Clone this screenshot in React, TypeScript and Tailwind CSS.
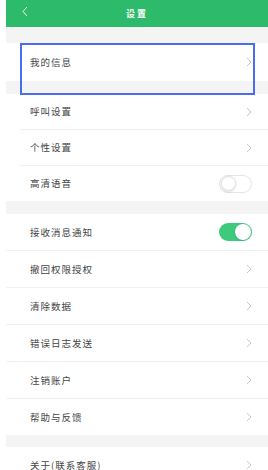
import React from 'react';

function Chevron() {
    return (
        <svg className="w-[6px] h-[10px]" viewBox="0 0 6 10" fill="none" stroke="#c8c8c8" strokeWidth={1}>
            <path d="M1 1l4 4-4 4" />
        </svg>
    );
}

function Toggle({ on }: { on: boolean }) {
    return on ? (
        <div className="w-[33px] h-[18px] rounded-full bg-[#3fc97d] flex items-center justify-end p-[1px]">
            <div className="w-[16px] h-[16px] rounded-full bg-white shadow-sm" />
        </div>
    ) : (
        <div className="w-[33px] h-[18px] rounded-full bg-white border border-[#e4e4e4] flex items-center p-[1px]">
            <div className="w-[15px] h-[15px] rounded-full bg-white border border-[#e0e0e0] shadow" />
        </div>
    );
}

interface RowProps {
    label: string;
    right?: React.ReactNode;
    height?: string;
}

function Row({ label, right, height = 'h-[36px]' }: RowProps) {
    return (
        <div className={`${height} flex items-center justify-between pl-[24px] pr-[16px] bg-white`}>
            <span className="text-[9.5px] tracking-[1px] text-[#444]">{label}</span>
            {right ?? <Chevron />}
        </div>
    );
}

export default function App() {
    return (
        <div className="w-[268px] h-[470px] overflow-hidden bg-white pl-[6px]" style={{ fontFamily: '"Noto Sans CJK SC", "Noto Sans", sans-serif' }}>
            <div className="relative h-full bg-[#f4f4f4]">
                {/* header */}
                <div className="h-[27px] bg-[#2dba6a] flex items-center relative">
                    <svg className="absolute left-[16px] top-[6px] w-[6px] h-[11px]" viewBox="0 0 6 11" fill="none" stroke="white" strokeWidth={0.9}>
                        <path d="M5 1L1 5.5 5 10" />
                    </svg>
                    <div className="flex-1 text-center text-white text-[9px] tracking-[2px] font-bold">设置</div>
                </div>

                <div className="h-[16px]" />
                <Row label="我的信息" height="h-[38px]" />

                <div className="h-[13px]" />
                <div className="bg-white">
                    <Row label="呼叫设置" height="h-[35px]" />
                    <div className="ml-[14px] h-px bg-[#f0f0f0]" />
                    <Row label="个性设置" height="h-[35px]" />
                    <div className="ml-[14px] h-px bg-[#f0f0f0]" />
                    <Row label="高清语音" height="h-[35px]" right={<Toggle on={false} />} />
                </div>

                <div className="h-[13px]" />
                <div className="bg-white">
                    <Row label="接收消息通知" right={<Toggle on={true} />} />
                    <div className="h-px bg-[#f0f0f0]" />
                    <Row label="撤回权限授权" />
                    <div className="h-px bg-[#f0f0f0]" />
                    <Row label="清除数据" />
                    <div className="h-px bg-[#f0f0f0]" />
                    <Row label="错误日志发送" />
                    <div className="h-px bg-[#f0f0f0]" />
                    <Row label="注销账户" />
                    <div className="h-px bg-[#f0f0f0]" />
                    <Row label="帮助与反馈" />
                </div>

                <div className="h-[12px]" />
                <Row label="关于(联系客服)" />

                {/* highlight box */}
                <div className="absolute left-[14px] top-[43px] w-[235px] h-[52px] border-2 border-[#4a6cf0]" />
            </div>
        </div>
    );
}
